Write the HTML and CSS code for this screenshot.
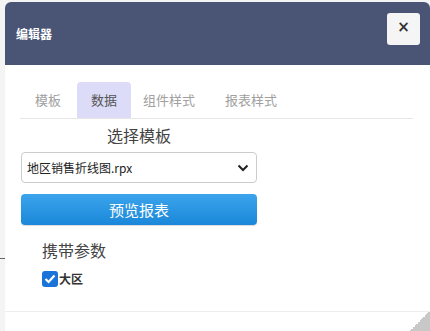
FILE: index.html
```html
<!DOCTYPE html>
<html lang="zh">

<head>
    <meta charset="utf-8">
    <title>编辑器</title>
    <link rel="stylesheet" href="styles.css">
</head>

<body>

    <div class="bagside">
        <div class="streg"></div>

        <section class="dialog">
            <header class="hoved">
                <h2>编辑器</h2>
                <button class="luk">×</button>
            </header>

            <div class="indhold">
                <nav class="faner">
                    <span class="fane">模板</span>
                    <span class="fane aktiv">数据</span>
                    <span class="fane">组件样式</span>
                    <span class="fane">报表样式</span>
                </nav>

                <div class="felt">
                    <h3 class="overskrift">选择模板</h3>
                    <div class="vaelg">
                        <span>地区销售折线图.rpx</span>
                        <svg width="12" height="8" viewBox="0 0 12 8">
                            <path d="M1.5 1.5 L6 6 L10.5 1.5" fill="none" stroke="#222" stroke-width="2"/>
                        </svg>
                    </div>
                    <button class="vis">预览报表</button>
                </div>

                <h3 class="param">携带参数</h3>
                <label class="boks">
                    <span class="flueben">
                        <svg width="12" height="10" viewBox="0 0 12 10">
                            <path d="M1.5 5 L4.6 8 L10.5 1.5" fill="none" stroke="#fff" stroke-width="2.2"/>
                        </svg>
                    </span>
                    大区
                </label>
            </div>

            <footer class="fod">
                <div class="haandtag"></div>
            </footer>
        </section>
    </div>

</body>

</html>
```

FILE: styles.css
```css
* {
    box-sizing: border-box;
}

body {
    margin: 0;
    background-color: #f4f4f4;
    font-family: "Noto Sans CJK SC", "Liberation Sans", sans-serif;
    overflow: hidden;
}

.bagside {
    position: relative;
    height: 331px;
    padding: 2px 0 0 5px;
}

.streg {
    position: absolute;
    left: 0;
    top: 258px;
    width: 5px;
    height: 1px;
    background: #666;
}

.dialog {
    width: 425px;
    height: 329px;
    background: #fff;
    border-radius: 6px 6px 0 0;
    display: flex;
    flex-direction: column;
}

.hoved {
    height: 63px;
    background: #4a5475;
    border-radius: 6px 6px 0 0;
    display: flex;
    align-items: center;
    justify-content: space-between;
    padding: 0 10px 0 11px;
}

.hoved h2 {
    margin: 0;
    color: #fff;
    font-size: 12px;
    font-weight: bold;
}

.luk {
    width: 33px;
    height: 32px;
    margin-top: -10px;
    border: none;
    border-radius: 3px;
    background: #f5f5f5;
    color: #333;
    font-size: 15px;
    font-weight: bold;
    font-family: "DejaVu Sans", sans-serif;
    line-height: 1;
    padding: 0 0 2px;
}

.indhold {
    flex: 1;
    padding: 17px 17px 0 11px;
}

.faner {
    display: flex;
    border-bottom: 1px solid #e6e6e6;
    margin-left: 4px;
    padding-left: 5px;
    height: 37px;
}

.fane {
    font-size: 13px;
    color: #a0a0a0;
    padding: 0 16px 0 10px;
    line-height: 36px;
    border-radius: 4px 4px 0 0;
}

.fane.aktiv {
    background: #dcdcf8;
    color: #555;
    padding: 0 14px;
    margin-right: 2px;
}

.fane:nth-child(4) {
    padding-left: 14px;
}

.felt {
    width: 236px;
    margin-left: 5px;
}

.overskrift {
    margin: 5px 0 0;
    text-align: center;
    font-size: 16px;
    font-weight: normal;
    color: #444;
    line-height: 22px;
}

.vaelg {
    margin-top: 6px;
    height: 31px;
    border: 1px solid #ccc;
    border-radius: 4px;
    display: flex;
    align-items: center;
    justify-content: space-between;
    padding: 0 7px 0 5px;
    font-size: 12px;
    color: #222;
}

.vis {
    margin-top: 11px;
    width: 100%;
    height: 31px;
    border: none;
    border-radius: 4px;
    background: linear-gradient(#3ca4ec, #1a87d9);
    color: #fff;
    font-size: 15px;
    font-family: "Noto Sans CJK SC", sans-serif;
    box-shadow: 0 1px 1px rgba(0, 0, 0, 0.15);
}

.param {
    margin: 14px 0 0 26px;
    font-size: 16px;
    font-weight: normal;
    color: #444;
    line-height: 22px;
}

.boks {
    display: flex;
    align-items: center;
    margin: 9px 0 0 26px;
    font-size: 12px;
    font-weight: bold;
    color: #333;
}

.flueben {
    width: 16px;
    height: 16px;
    background: #1a73d9;
    border-radius: 3px;
    display: flex;
    align-items: center;
    justify-content: center;
    margin-right: 1px;
}

.fod {
    height: 20px;
    border-top: 1px solid #eee;
    position: relative;
}

.haandtag {
    position: absolute;
    right: 0;
    bottom: 0;
    width: 20px;
    height: 20px;
    background: linear-gradient(135deg, transparent 50%, #c8c8c8 50%);
}
```
